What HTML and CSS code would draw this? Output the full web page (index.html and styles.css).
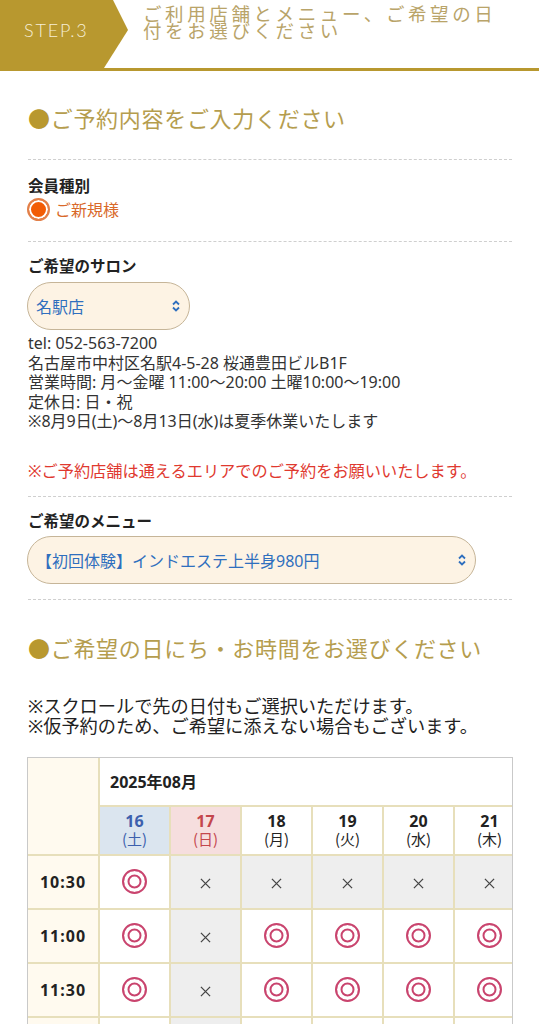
FILE: index.html
```html
<!DOCTYPE html>
<html lang="ja">
<head>
<meta charset="utf-8">
<title>STEP.3</title>
<link rel="stylesheet" href="styles.css">
</head>
<body>
<header class="step">
  <div class="step-badge">STEP.3</div>
  <h1 class="step-title">ご利用店舗とメニュー、ご希望の日付をお選びください</h1>
</header>

<main class="content">
  <h2 class="sec-title"><span class="dot">●</span>ご予約内容をご入力ください</h2>

  <section class="block block-first">
    <div class="label">会員種別</div>
    <div class="radio-row"><span class="radio"></span><span class="radio-text">ご新規様</span></div>
  </section>

  <section class="block">
    <div class="label">ご希望のサロン</div>
    <div class="select select-short">
      <span>名駅店</span>
      <svg class="chev" viewBox="0 0 10 14"><path d="M2 5.5L5 2.5L8 5.5M2 8.5L5 11.5L8 8.5"/></svg>
    </div>
    <div class="info">
      <p>tel: 052-563-7200</p>
      <p>名古屋市中村区名駅4-5-28 桜通豊田ビルB1F</p>
      <p>営業時間: 月～金曜 11:00～20:00 土曜10:00～19:00</p>
      <p>定休日: 日・祝</p>
      <p>※8月9日(土)～8月13日(水)は夏季休業いたします</p>
    </div>
    <p class="warn">※ご予約店舗は通えるエリアでのご予約をお願いいたします。</p>
  </section>

  <section class="block block-last">
    <div class="label">ご希望のメニュー</div>
    <div class="select select-long">
      <span>【初回体験】インドエステ上半身980円</span>
      <svg class="chev" viewBox="0 0 10 14"><path d="M2 5.5L5 2.5L8 5.5M2 8.5L5 11.5L8 8.5"/></svg>
    </div>
  </section>

  <h2 class="sec-title sec-title-2"><span class="dot">●</span>ご希望の日にち・お時間をお選びください</h2>

  <div class="notes">
    <p>※スクロールで先の日付もご選択いただけます。</p>
    <p>※仮予約のため、ご希望に添えない場合もございます。</p>
  </div>

  <div class="cal">
    <table>
      <colgroup>
        <col class="c-time"><col class="c-day"><col class="c-day"><col class="c-day"><col class="c-day"><col class="c-day"><col class="c-day">
      </colgroup>
      <tr class="r-month">
        <td class="corner" rowspan="2"></td>
        <td class="month" colspan="6">2025年08月</td>
      </tr>
      <tr class="r-days">
        <td class="day sat"><b>16</b><span>(土)</span></td>
        <td class="day sun"><b>17</b><span>(日)</span></td>
        <td class="day"><b>18</b><span>(月)</span></td>
        <td class="day"><b>19</b><span>(火)</span></td>
        <td class="day"><b>20</b><span>(水)</span></td>
        <td class="day"><b>21</b><span>(木)</span></td>
      </tr>
      <tr class="r-slot">
        <td class="time">10:30</td>
        <td class="ok"><span class="maru"></span></td>
        <td class="ng"><svg class="batsu" viewBox="0 0 12 12"><path d="M1 1L11 11M11 1L1 11"/></svg></td>
        <td class="ng"><svg class="batsu" viewBox="0 0 12 12"><path d="M1 1L11 11M11 1L1 11"/></svg></td>
        <td class="ng"><svg class="batsu" viewBox="0 0 12 12"><path d="M1 1L11 11M11 1L1 11"/></svg></td>
        <td class="ng"><svg class="batsu" viewBox="0 0 12 12"><path d="M1 1L11 11M11 1L1 11"/></svg></td>
        <td class="ng"><svg class="batsu" viewBox="0 0 12 12"><path d="M1 1L11 11M11 1L1 11"/></svg></td>
      </tr>
      <tr class="r-slot">
        <td class="time">11:00</td>
        <td class="ok"><span class="maru"></span></td>
        <td class="ng"><svg class="batsu" viewBox="0 0 12 12"><path d="M1 1L11 11M11 1L1 11"/></svg></td>
        <td class="ok"><span class="maru"></span></td>
        <td class="ok"><span class="maru"></span></td>
        <td class="ok"><span class="maru"></span></td>
        <td class="ok"><span class="maru"></span></td>
      </tr>
      <tr class="r-slot">
        <td class="time">11:30</td>
        <td class="ok"><span class="maru"></span></td>
        <td class="ng"><svg class="batsu" viewBox="0 0 12 12"><path d="M1 1L11 11M11 1L1 11"/></svg></td>
        <td class="ok"><span class="maru"></span></td>
        <td class="ok"><span class="maru"></span></td>
        <td class="ok"><span class="maru"></span></td>
        <td class="ok"><span class="maru"></span></td>
      </tr>
      <tr class="r-slot">
        <td class="time">12:00</td>
        <td class="ok"><span class="maru"></span></td>
        <td class="ng"><svg class="batsu" viewBox="0 0 12 12"><path d="M1 1L11 11M11 1L1 11"/></svg></td>
        <td class="ok"><span class="maru"></span></td>
        <td class="ok"><span class="maru"></span></td>
        <td class="ok"><span class="maru"></span></td>
        <td class="ok"><span class="maru"></span></td>
      </tr>
    </table>
  </div>
</main>
</body>
</html>
```

FILE: styles.css
```css
html, body {
  margin: 0;
  padding: 0;
  background: #ffffff;
}

body {
  font-family: "Noto Sans", "Noto Sans CJK JP", sans-serif;
  color: #333333;
  width: 539px;
  overflow: hidden;
}

p {
  margin: 0;
}

/* ---------- header ---------- */
.step {
  display: flex;
  align-items: flex-start;
  height: 68px;
  border-bottom: 3px solid #b8982f;
}

.step-badge {
  flex: none;
  width: 128px;
  height: 68px;
  background: #b8982f;
  clip-path: polygon(0 0, 113px 0, 128px 30px, 104px 68px, 0 68px);
  color: #f6eed6;
  font-family: Lato, "Noto Sans", sans-serif;
  font-weight: 300;
  font-size: 18px;
  letter-spacing: 1.8px;
  line-height: 60px;
  padding-left: 24px;
  box-sizing: border-box;
}

.step-title {
  margin: 5px 0 0 15px;
  width: 370px;
  font-family: "Noto Sans CJK JP", sans-serif;
  font-size: 18.5px;
  font-weight: 400;
  line-height: 17px;
  letter-spacing: 3.6px;
  color: #b9a469;
}

/* ---------- content ---------- */
.content {
  margin: 0 27px 0 28px;
}

.sec-title {
  margin: 31px 0 0;
  font-family: "Noto Sans CJK JP", sans-serif;
  font-size: 22px;
  line-height: 30px;
  font-weight: 400;
  letter-spacing: 0.7px;
  color: #b59d4e;
}

.sec-title .dot {
  color: #b8982f;
}

.block {
  border-top: 1px dashed #cfcfcf;
  padding: 13px 0 15px;
}

.block-first {
  margin-top: 27px;
  padding-top: 15px;
  padding-bottom: 20px;
}

.block-last {
  border-bottom: 1px dashed #cfcfcf;
  padding-bottom: 15px;
}

.label {
  font-family: "Noto Sans CJK JP", sans-serif;
  font-size: 15.5px;
  line-height: 20px;
  font-weight: 700;
  color: #222222;
}

.radio-row {
  display: flex;
  align-items: center;
  gap: 5px;
  margin-top: 2px;
  height: 24px;
  margin-left: -1px;
}

.radio {
  width: 23px;
  height: 23px;
  box-sizing: border-box;
  border-radius: 50%;
  border: 2px solid #e2804a;
  background: #f25c05;
  box-shadow: inset 0 0 0 2px #ffffff;
}

.radio-text {
  font-family: "Noto Sans CJK JP", sans-serif;
  font-size: 16px;
  color: #d9692a;
}

.select {
  display: flex;
  align-items: center;
  justify-content: space-between;
  box-sizing: border-box;
  height: 48px;
  margin-left: -1px;
  padding: 0 8px 0 8px;
  border: 1.5px solid #c6b598;
  border-radius: 24px;
  background: #fdf3e4;
  color: #2f6fbe;
  font-size: 16px;
}

.select-short {
  width: 163px;
  margin-top: 7px;
}

.select-long {
  width: 449px;
  margin-top: 6px;
}

.chev {
  flex: none;
  width: 10px;
  height: 14px;
  fill: none;
  stroke: #2f6fbe;
  stroke-width: 1.8;
}

.info {
  margin-top: 4px;
  font-size: 16px;
  line-height: 19.5px;
  color: #333333;
}

.warn {
  margin-top: 29px;
  font-size: 16.2px;
  line-height: 20px;
  color: #e0392f;
}

.sec-title-2 {
  margin-top: 32px;
}

.notes {
  margin-top: 34px;
  font-size: 18.2px;
  line-height: 20px;
  color: #222222;
}

/* ---------- calendar ---------- */
.cal {
  margin: 21px 0 0 -1px;
  width: 486px;
  box-sizing: border-box;
  border: 1px solid #c9c9c9;
  border-bottom: none;
  overflow: hidden;
}

.cal table {
  border-collapse: collapse;
  table-layout: fixed;
  width: 497px;
}

.c-time {
  width: 71px;
}

.c-day {
  width: 71px;
}

.cal td {
  border: 2px solid #e7dfbb;
  padding: 0;
  text-align: center;
  vertical-align: middle;
}

.r-month td {
  border-top: none;
}

.cal tr td:first-child {
  border-left: none;
}

.r-days td:first-child {
  border-left: 2px solid #e7dfbb;
}

.corner {
  background: #fffaef;
}

.r-month {
  height: 48px;
}

.month {
  text-align: left !important;
  padding-left: 10px !important;
  font-size: 16px;
  font-weight: 700;
  color: #222222;
  background: #ffffff;
}

.r-days {
  height: 49px;
}

.day {
  background: #ffffff;
  color: #222222;
}

.day b {
  display: block;
  font-size: 16px;
  line-height: 18px;
  font-weight: 700;
}

.day span {
  display: block;
  font-family: "Noto Sans CJK JP", sans-serif;
  font-size: 15px;
  line-height: 18px;
}

.day.sat {
  background: #dbe5ef;
  color: #3c60ad;
}

.day.sun {
  background: #f6dede;
  color: #c4464c;
}

.r-slot {
  height: 54px;
}

.time {
  background: #fffaef;
  font-size: 16px;
  font-weight: 700;
  letter-spacing: 1px;
  color: #222222;
}

.ok {
  background: #ffffff;
}

.ng {
  background: #eeeeee;
}

.maru {
  display: inline-block;
  vertical-align: middle;
  width: 25px;
  height: 25px;
  box-sizing: border-box;
  border-radius: 50%;
  border: 2px solid #c9446e;
  box-shadow: inset 0 0 0 3.5px #ffffff, inset 0 0 0 5.5px #c9446e;
}

.batsu {
  width: 11px;
  height: 11px;
  vertical-align: middle;
  fill: none;
  stroke: #444444;
  stroke-width: 1.4;
}
```
